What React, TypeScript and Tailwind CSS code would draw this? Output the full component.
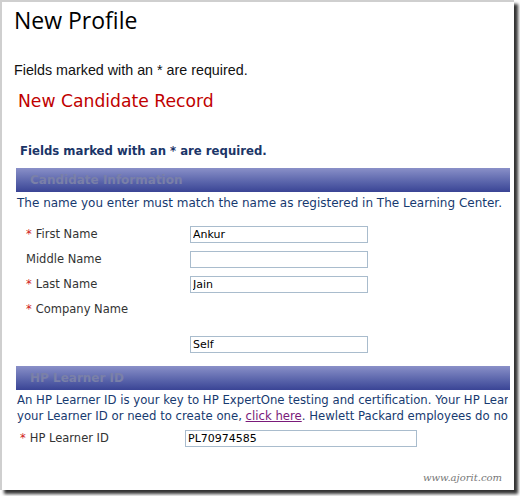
const verdana = { fontFamily: '"DejaVu Sans", Verdana, sans-serif' };

function Bar({ title }: { title: string }) {
  return (
    <div className="h-[24px] ml-[14px] mr-[4px] bg-gradient-to-b from-[#8a90c8] to-[#3a4495] flex items-center pl-[14px]">
      <span className="text-[12px] font-bold text-[#7a80a8]" style={verdana}>
        {title}
      </span>
    </div>
  );
}

function Field({ label, req, value }: { label: string; req?: boolean; value?: string }) {
  return (
    <div className="flex items-center h-[25px]">
      <div className="w-[188px] pl-[24px] text-[11.5px] text-[#333]" style={verdana}>
        {req && <span className="text-[#d02020] mr-[4px]">*</span>}
        {label}
      </div>
      <input
        readOnly
        value={value ?? ""}
        className="w-[178px] h-[17px] border border-[#a9bccd] px-[2px] text-[11px] text-black outline-none"
        style={verdana}
      />
    </div>
  );
}

export default function App() {
  return (
    <div className="w-[520px] h-[496px] bg-white relative overflow-hidden">
      <div className="w-[514px] h-[490px] border-l-2 border-t-2 border-[#cfcfcf] shadow-[4px_4px_3px_rgba(0,0,0,0.8)] bg-white overflow-hidden">
        <h1 className="pl-[12px] pt-[4px] text-[23px] text-black leading-[28px]" style={{ fontFamily: '"Open Sans", "Noto Sans", sans-serif' }}>
          New Profile
        </h1>
        <p className="pl-[12px] mt-[26px] text-[14.3px] leading-[20px] text-[#111]" style={{ fontFamily: '"Liberation Sans", Arial, sans-serif' }}>
          Fields marked with an * are required.
        </p>
        <h2 className="pl-[16px] mt-[9px] text-[17.2px] leading-[24px] text-[#c00000]" style={verdana}>
          New Candidate Record
        </h2>
        <p className="pl-[18px] mt-[30px] text-[11.7px] leading-[16px] font-bold text-[#1b3568]" style={verdana}>
          Fields marked with an * are required.
        </p>
        <div className="mt-[9px]">
          <Bar title="Candidate Information" />
        </div>
        <p className="pl-[15px] mt-[3px] text-[12px] leading-[16px] text-[#173a70] whitespace-nowrap" style={verdana}>
          The name you enter must match the name as registered in The Learning Center.
        </p>
        <div className="mt-[11px]">
          <Field label="First Name" req value="Ankur" />
          <Field label="Middle Name" />
          <Field label="Last Name" req value="Jain" />
          <div className="flex items-center h-[25px]">
            <div className="pl-[24px] text-[11.5px] text-[#333]" style={verdana}>
              <span className="text-[#d02020] mr-[4px]">*</span>Company Name
            </div>
          </div>
          <div className="h-[10px]" />
          <Field label="" value="Self" />
        </div>
        <div className="mt-[9px]">
          <Bar title="HP Learner ID" />
        </div>
        <div className="pl-[15px] mr-[6px] mt-[2px] text-[11.7px] leading-[16px] text-[#173a70] whitespace-nowrap overflow-hidden" style={verdana}>
          <div>An HP Learner ID is your key to HP ExpertOne testing and certification. Your HP Learner ID</div>
          <div>
            your Learner ID or need to create one, <span className="text-[#7a1a7a] underline">click here</span>. Hewlett Packard employees do not
          </div>
        </div>
        <div className="flex items-center h-[25px] mt-[2px]">
          <div className="w-[183px] pl-[18px] text-[11.5px] text-[#333]" style={verdana}>
            <span className="text-[#d02020] mr-[4px]">*</span>HP Learner ID
          </div>
          <input
            readOnly
            value="PL70974585"
            className="w-[232px] h-[17px] border border-[#a9bccd] px-[2px] text-[11px] text-black outline-none"
            style={verdana}
          />
        </div>
        <div className="flex justify-end pr-[12px] mt-[19px]">
          <span className="text-[10px] leading-[16px] italic text-[#777]" style={{ fontFamily: '"DejaVu Serif", serif' }}>
            www.ajorit.com
          </span>
        </div>
      </div>
    </div>
  );
}
